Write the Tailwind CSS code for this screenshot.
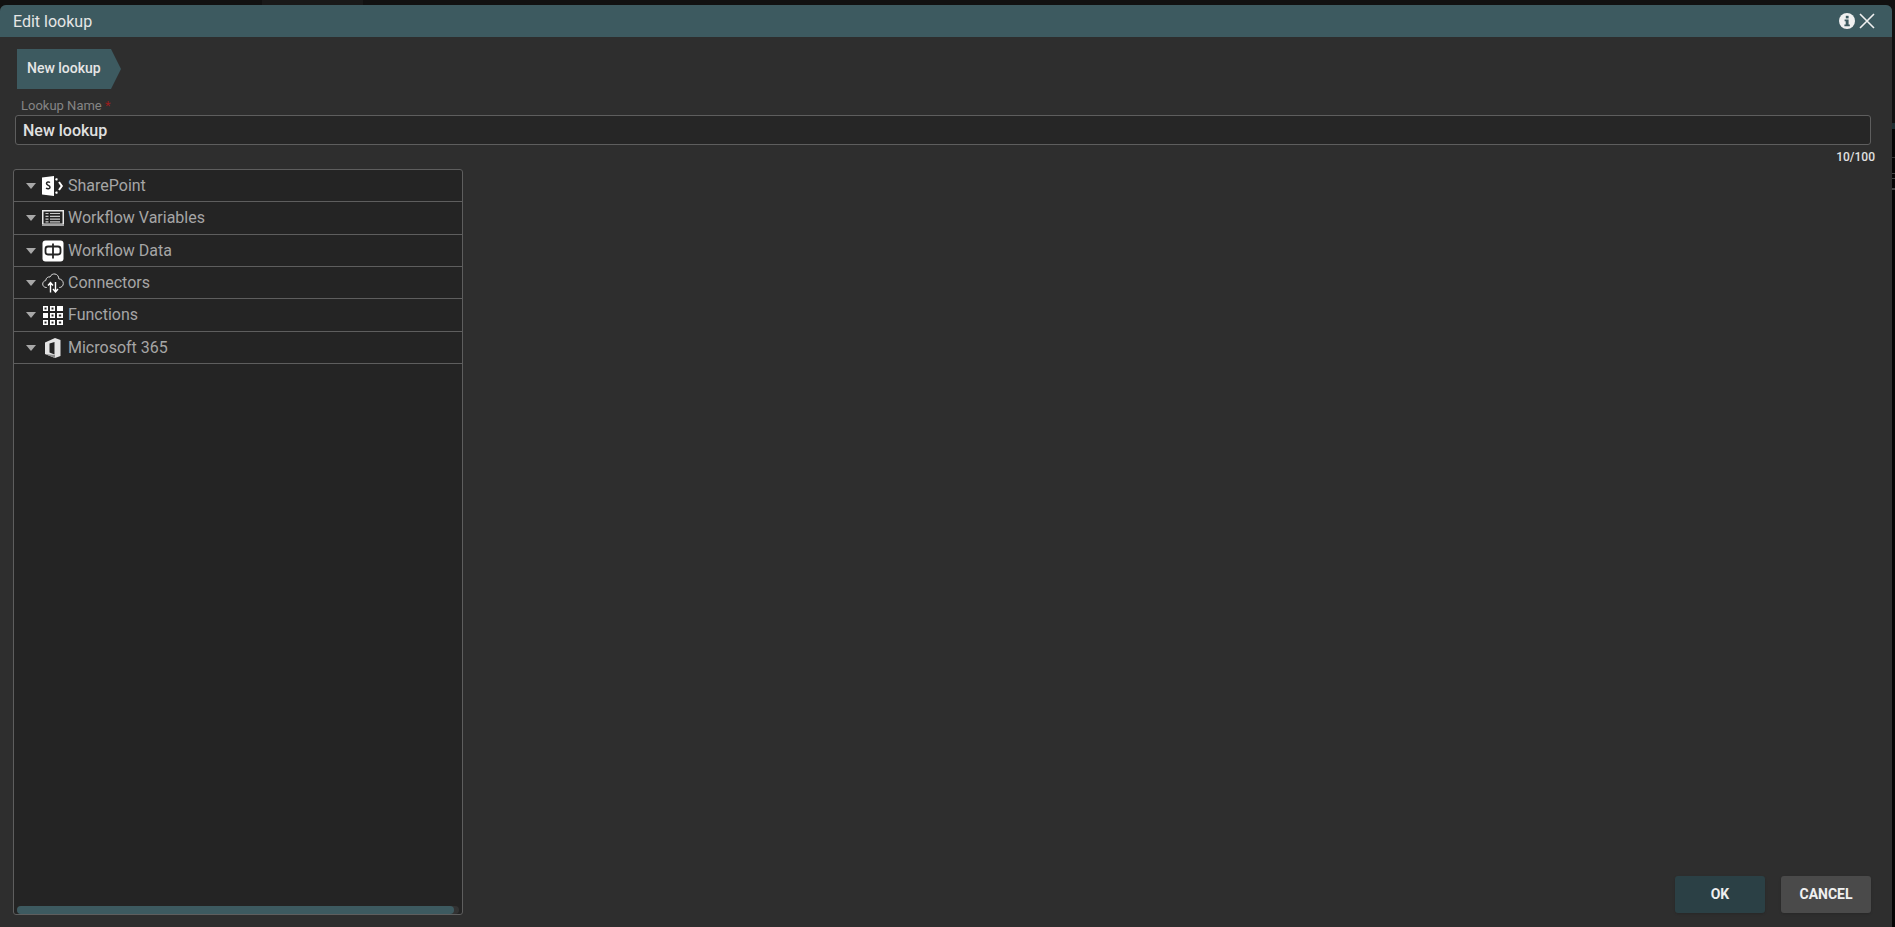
<!DOCTYPE html>
<html lang="en">
<head>
    <meta charset="UTF-8">
    <title>Edit lookup</title>
    <script src="https://cdn.jsdelivr.net/npm/@tailwindcss/browser@4"></script>
</head>
<body class="relative h-[927px] w-[1895px] overflow-hidden bg-[#111111] font-['Roboto',sans-serif]">
    <!-- page behind the dialog, only slivers show -->
    <div class="absolute top-0 left-[262px] h-[5px] w-[101px] bg-[#191919]"></div>
    <div class="absolute top-[123px] right-0 h-[6px] w-[3px] bg-[#1e2f33]"></div>
    <div class="absolute top-[129px] right-0 h-[798px] w-[3px] bg-[#050505]"></div>
    <div class="absolute top-[157px] right-0 h-px w-[3px] bg-[#333333]"></div>
    <div class="absolute top-[173px] right-0 h-px w-[3px] bg-[#444444]"></div>
    <div class="absolute top-[178px] right-0 h-px w-[3px] bg-[#444444]"></div>
    <div class="absolute top-[188px] right-0 h-[2px] w-[3px] bg-[#444444]"></div>

    <div class="relative flex h-full flex-col pt-[5px] pr-[3px]">
        <!-- dialog -->
        <div class="flex min-h-0 flex-1 flex-col rounded-t-[6px] bg-[#2e2e2e]">
            <header class="flex h-[32px] shrink-0 items-center justify-between rounded-t-[6px] bg-[#3d5a60] pr-[16px] pl-[13px]">
                <span class="pt-[1px] text-[16px] text-[#e6e6e6]">Edit lookup</span>
                <div class="flex items-center gap-[3px]">
                    <svg width="16" height="16" viewBox="0 0 16 16">
                        <circle cx="8" cy="8" r="8" fill="#f0f0f0"/>
                        <rect x="6.8" y="2.8" width="2.8" height="2.6" fill="#3d5a60"/>
                        <path d="M5.6 6.6h4v5h1.2v1.6H5.4v-1.6h1.3V8.2H5.6z" fill="#3d5a60"/>
                    </svg>
                    <svg width="18" height="18" viewBox="0 0 18 18">
                        <path d="M2 2l14 14M16 2L2 16" stroke="#f0f0f0" stroke-width="1.6" fill="none"/>
                    </svg>
                </div>
            </header>

            <div class="flex min-h-0 flex-1 flex-col pt-[12px] pr-[21px] pb-[12px] pl-[13px]">
                <div class="ml-[4px] flex h-[40px] w-[104px] shrink-0 items-center bg-[#3d5a60] pb-[1px] pl-[10px] text-[14px] font-medium text-[#e6e6e6] [clip-path:polygon(0_0,94px_0,104px_50%,94px_100%,0_100%)]">New lookup</div>

                <label class="mt-[8px] ml-[8px] block h-[18px] text-[13px] leading-[17px] text-[#858585]">Lookup Name <span class="text-[#9c1c1c]">*</span></label>
                <div class="ml-[2px] flex h-[30px] shrink-0 items-center rounded-[3px] border border-[#5e5e5e] bg-[#262626] pt-[1px] pl-[7px] text-[16px] font-medium text-[#e0e0e0]">New lookup</div>
                <div class="-mr-[4px] mt-[4px] h-[20px] text-right text-[12px] leading-[16px] font-medium text-[#e0e0e0]">10/100</div>

                <div class="flex min-h-0 flex-1 items-end justify-between">
                    <!-- tree -->
                    <div class="relative h-full w-[450px] rounded-[3px] border border-[#5e5e5e] bg-[#242424]">
                        <div class="flex h-[32px] items-center border-b border-[#5e5e5e] pl-[12px]">
                            <span class="mr-[6px] h-0 w-0 border-x-[5px] border-t-[6px] border-x-transparent border-t-[#a8a8a8]"></span>
                            <svg class="mr-[4px]" width="22" height="20" viewBox="0 0 22 20">
                                <path d="M0 1.500l12-1.500v20L0 18.500z" fill="#fff"/>
                                <path d="M8 6.500C6.800 5.700 4.500 5.800 4.500 7.600c0 2 3.500 1.600 3.500 3.600 0 1.800-2.400 2-4 1" stroke="#242424" stroke-width="1.500" fill="none"/>
                                <path d="M13.500 3l2 0.800M17 6l2.800 4-2.800 4M15.500 16.200l-2 0.800" stroke="#fff" stroke-width="2" fill="none"/>
                            </svg>
                            <span class="text-[16px] text-[#a6a6a6]">SharePoint</span>
                        </div>
                        <div class="flex h-[33px] items-center border-b border-[#5e5e5e] pl-[12px]">
                            <span class="mr-[6px] h-0 w-0 border-x-[5px] border-t-[6px] border-x-transparent border-t-[#a8a8a8]"></span>
                            <svg class="mr-[4px]" width="22" height="16" viewBox="0 0 22 16">
                                <path d="M0 0h22v16H0zM1.500 1.500v12h19v-12z" fill="#e8e8e8" fill-rule="evenodd"/>
                                <path d="M0 14h22v2H0z" fill="#a0a0a0"/>
                                <path d="M3.500 3.500h3M8 3.500h10M3.500 6.300h3M8 6.300h10M3.500 9.100h3M8 9.100h10M3.500 11.900h3M8 11.900h10" stroke="#c8c8c8" stroke-width="1.200"/>
                            </svg>
                            <span class="text-[16px] text-[#a6a6a6]">Workflow Variables</span>
                        </div>
                        <div class="flex h-[32px] items-center border-b border-[#5e5e5e] pl-[12px]">
                            <span class="mr-[6px] h-0 w-0 border-x-[5px] border-t-[6px] border-x-transparent border-t-[#a8a8a8]"></span>
                            <svg class="mr-[4px]" width="22" height="22" viewBox="0 0 22 22">
                                <rect width="21" height="21" x="0.500" y="0.500" rx="3" fill="#fff"/>
                                <rect x="3.500" y="6.500" width="15" height="8" rx="2.500" fill="none" stroke="#242424" stroke-width="1.800"/>
                                <path d="M11 3.500v15" stroke="#242424" stroke-width="1.800"/>
                            </svg>
                            <span class="text-[16px] text-[#a6a6a6]">Workflow Data</span>
                        </div>
                        <div class="flex h-[32px] items-center border-b border-[#5e5e5e] pl-[12px]">
                            <span class="mr-[6px] h-0 w-0 border-x-[5px] border-t-[6px] border-x-transparent border-t-[#a8a8a8]"></span>
                            <svg class="mr-[4px]" width="22" height="20" viewBox="0 0 22 20">
                                <path d="M5 14.500H4.500C2 14.500.700 12.800.700 11c0-1.800 1.300-3.200 3-3.400C4 4.800 6 3.500 8 4c1-2.400 3-3.300 5-3 2.400.400 3.800 2.400 3.800 4.800 2.500.300 4.500 2 4.500 4.700 0 2.300-1.700 4-4 4" fill="none" stroke="#d8d8d8" stroke-width="1"/>
                                <path d="M8.500 19.500V10M6 12.500l2.500-3 2.500 3M13.500 9v10M11 16l2.500 3 2.500-3" fill="none" stroke="#fff" stroke-width="1.400"/>
                            </svg>
                            <span class="text-[16px] text-[#a6a6a6]">Connectors</span>
                        </div>
                        <div class="flex h-[33px] items-center border-b border-[#5e5e5e] pl-[12px]">
                            <span class="mr-[6px] h-0 w-0 border-x-[5px] border-t-[6px] border-x-transparent border-t-[#a8a8a8]"></span>
                            <svg class="mr-[4px]" width="22" height="19" viewBox="0 0 22 19" fill="#fff">
                                <path fill-rule="evenodd" d="M1 0h5v5H1zM2.500 1.500v2h2v-2zM8 0h5v5H8zM9.500 1.500v2h2v-2zM15 0h6v5h-6zM1 7h5v5H1zM8 7h5v5H8zM9.500 8.500v2h2v-2zM15 7h6v5h-6zM16.800 8.500v2h2.400v-2zM1 14h5v5H1zM2.500 15.500v2h2v-2zM8 14h5v5H8zM9.500 15.500v2h2v-2zM15 14h6v5h-6zM16.800 15.500v2h2.400v-2z"/>
                            </svg>
                            <span class="text-[16px] text-[#a6a6a6]">Functions</span>
                        </div>
                        <div class="flex h-[32px] items-center border-b border-[#5e5e5e] pl-[12px]">
                            <span class="mr-[6px] h-0 w-0 border-x-[5px] border-t-[6px] border-x-transparent border-t-[#a8a8a8]"></span>
                            <svg class="mr-[4px]" width="22" height="20" viewBox="0 0 22 20">
                                <path d="M3 4.500L13 0l5.500 2v16L13 20 3 16z" fill="#e4e4e4"/>
                                <path d="M7.500 5.500L12.500 4v12.500L7.500 14.500z" fill="#242424"/>
                                <path d="M3 16l10 1v3z" fill="#8f8f8f"/>
                            </svg>
                            <span class="text-[16px] text-[#a6a6a6]">Microsoft 365</span>
                        </div>
                        <!-- horizontal scrollbar -->
                        <div class="absolute right-[3px] bottom-0 left-[3px] h-[8px] rounded-[4px] bg-[#333333]">
                            <div class="h-full w-[437px] rounded-[4px] bg-[#3d5a60]"></div>
                        </div>
                    </div>

                    <div class="mb-[2px] flex gap-[16px]">
                        <button class="h-[37px] w-[90px] rounded-[3px] bg-[#2b4045] text-[14px] font-bold text-[#eeeeee] shadow-sm">OK</button>
                        <button class="h-[37px] w-[90px] rounded-[3px] bg-[#4a4a4a] text-[14px] font-bold text-[#f0f0f0] shadow-sm">CANCEL</button>
                    </div>
                </div>
            </div>
        </div>
    </div>
</body>
</html>
